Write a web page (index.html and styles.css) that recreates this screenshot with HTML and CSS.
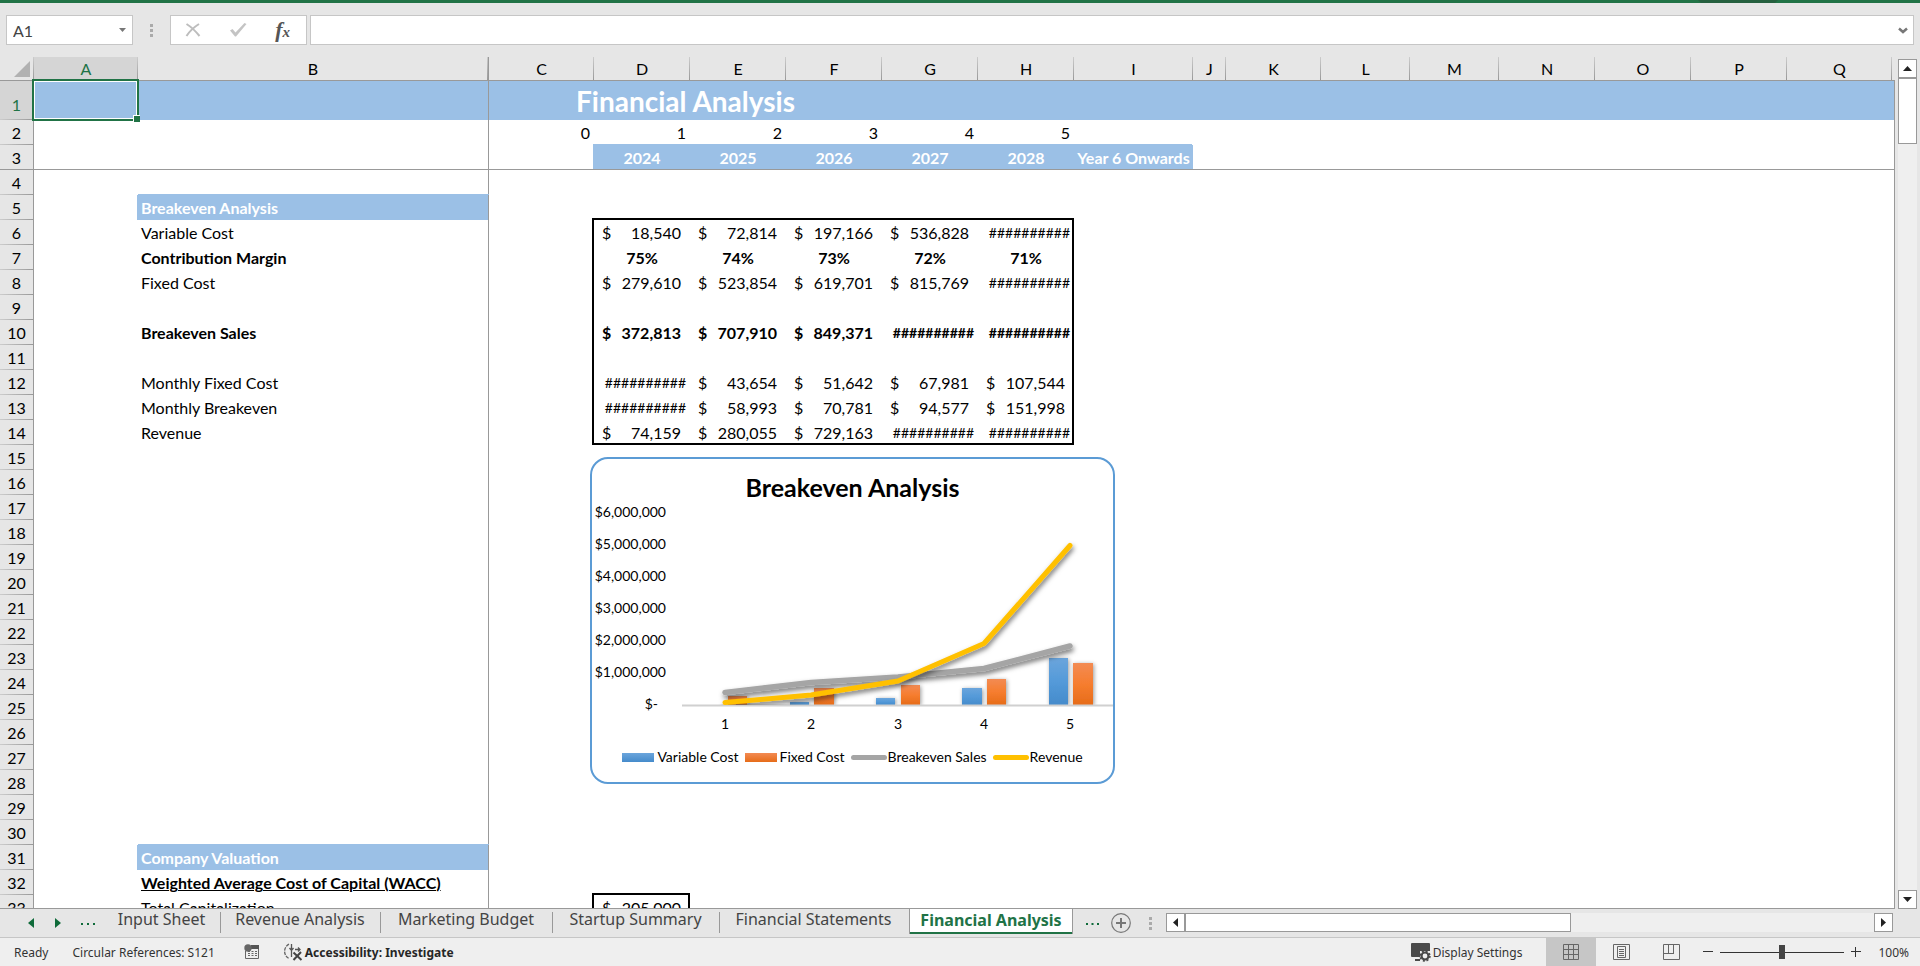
FILE: index.html
```html
<!DOCTYPE html>
<html lang="en">
<head>
<meta charset="utf-8">
<title>Financial Analysis</title>
<link rel="stylesheet" href="styles.css">
</head>
<body>
<div class="ribbon-edge"><svg class="ribbon-shade" width="80" height="3" viewBox="0 0 80 3"><path d="M0 0H80L77 3H3Z" fill="#25603f"/></svg></div>

<div class="formula-bar">
  <div class="name-box">
    <input class="name-input" type="text" value="A1" aria-label="Name box">
    <button class="plain name-drop" aria-label="Show names"><svg width="7" height="4" viewBox="0 0 7 4"><path d="M0 0H7L3.5 4Z" fill="#777"/></svg></button>
  </div>
  <svg class="grip" width="3" height="13" viewBox="0 0 3 13"><path d="M0 0h3v3H0zM0 5h3v3H0zM0 10h3v3H0z" fill="#aaa"/></svg>
  <div class="edit-tools">
    <button class="plain" aria-label="Cancel"><svg width="16" height="14" viewBox="0 0 16 14"><path d="M1.500 1 Q8 5 14.500 13M14 1 Q6 6 1.500 13" fill="none" stroke="#bdbdbd" stroke-width="2"/></svg></button>
    <button class="plain" aria-label="Enter"><svg width="18" height="15" viewBox="0 0 18 15"><path d="M1 8.500L3.500 7L6.500 10.500L15.500 1L17.500 2L7 14.500H6Z" fill="#c4c4c4"/></svg></button>
    <button class="plain fx" aria-label="Insert function"><i>f</i><i class="fx-x">x</i></button>
  </div>
  <div class="formula-box">
    <input class="formula-input" type="text" aria-label="Formula bar">
    <button class="plain expand" aria-label="Expand formula bar"><svg width="10" height="7" viewBox="0 0 10 7"><path d="M1 1.500L5 5L9 1.500" fill="none" stroke="#777" stroke-width="2.500"/></svg></button>
  </div>
</div>

<main class="workarea">
<div class="sheet">
<table class="grid">
<colgroup><col class="c-head"><col class="c-a"><col class="c-b"><col class="c-c"><col class="c-d"><col class="c-d"><col class="c-d"><col class="c-d"><col class="c-d"><col class="c-i"><col class="c-j"><col class="c-k"><col class="c-l"><col class="c-l"><col class="c-d"><col class="c-d"><col class="c-d"><col class="c-c"><col></colgroup>
<thead><tr><th class="corner"><svg width="16" height="16" viewBox="0 0 16 16"><path d="M16 0V16H0Z" fill="#b1b1b1"/></svg></th><th class="on">A</th><th class="b">B</th><th>C</th><th>D</th><th>E</th><th>F</th><th>G</th><th>H</th><th>I</th><th>J</th><th>K</th><th>L</th><th>M</th><th>N</th><th>O</th><th>P</th><th>Q</th><th class="rest"></th></tr></thead>
<tbody>
<tr class="banner"><th class="on">1</th><td class="active-cell"><div class="selection"></div></td><td class="b"></td><td class="title" colspan="4">Financial Analysis</td><td colspan="12"></td></tr>
<tr><th>2</th><td></td><td class="b"></td><td class="num">0</td><td class="num">1</td><td class="num">2</td><td class="num">3</td><td class="num">4</td><td class="num">5</td><td colspan="10"></td></tr>
<tr class="freeze"><th>3</th><td></td><td class="b"></td><td></td><td class="year">2024</td><td class="year">2025</td><td class="year">2026</td><td class="year">2027</td><td class="year">2028</td><td class="year">Year 6 Onwards</td><td colspan="9"></td></tr>
<tr><th>4</th><td></td><td class="b"></td><td colspan="16"></td></tr>
<tr><th>5</th><td></td><td class="b section">Breakeven Analysis</td><td colspan="16"></td></tr>
<tr><th>6</th><td></td><td class="b">Variable Cost</td><td></td>
<td class="box-tl"><div class="acct"><span>$</span><span>18,540</span></div></td><td class="box-t"><div class="acct"><span>$</span><span>72,814</span></div></td><td class="box-t"><div class="acct"><span>$</span><span>197,166</span></div></td><td class="box-t"><div class="acct"><span>$</span><span>536,828</span></div></td><td class="hash box-tr">##########</td><td colspan="10"></td></tr>
<tr class="strong"><th>7</th><td></td><td class="b">Contribution Margin</td><td></td><td class="pct box-l">75%</td><td class="pct">74%</td><td class="pct">73%</td><td class="pct">72%</td><td class="pct box-r">71%</td><td colspan="10"></td></tr>
<tr><th>8</th><td></td><td class="b">Fixed Cost</td><td></td>
<td class="box-l"><div class="acct"><span>$</span><span>279,610</span></div></td><td><div class="acct"><span>$</span><span>523,854</span></div></td><td><div class="acct"><span>$</span><span>619,701</span></div></td><td><div class="acct"><span>$</span><span>815,769</span></div></td><td class="hash box-r">##########</td><td colspan="10"></td></tr>
<tr><th>9</th><td></td><td class="b"></td><td></td><td class="box-l"></td><td colspan="3"></td><td class="box-r"></td><td colspan="10"></td></tr>
<tr class="strong"><th>10</th><td></td><td class="b">Breakeven Sales</td><td></td>
<td class="box-l"><div class="acct"><span>$</span><span>372,813</span></div></td><td><div class="acct"><span>$</span><span>707,910</span></div></td><td><div class="acct"><span>$</span><span>849,371</span></div></td><td class="hash">##########</td><td class="hash box-r">##########</td><td colspan="10"></td></tr>
<tr><th>11</th><td></td><td class="b"></td><td></td><td class="box-l"></td><td colspan="3"></td><td class="box-r"></td><td colspan="10"></td></tr>
<tr><th>12</th><td></td><td class="b">Monthly Fixed Cost</td><td></td>
<td class="hash box-l">##########</td><td><div class="acct"><span>$</span><span>43,654</span></div></td><td><div class="acct"><span>$</span><span>51,642</span></div></td><td><div class="acct"><span>$</span><span>67,981</span></div></td><td class="box-r"><div class="acct"><span>$</span><span>107,544</span></div></td><td colspan="10"></td></tr>
<tr><th>13</th><td></td><td class="b">Monthly Breakeven</td><td></td>
<td class="hash box-l">##########</td><td><div class="acct"><span>$</span><span>58,993</span></div></td><td><div class="acct"><span>$</span><span>70,781</span></div></td><td><div class="acct"><span>$</span><span>94,577</span></div></td><td class="box-r"><div class="acct"><span>$</span><span>151,998</span></div></td><td colspan="10"></td></tr>
<tr><th>14</th><td></td><td class="b">Revenue</td><td></td>
<td class="box-bl"><div class="acct"><span>$</span><span>74,159</span></div></td><td class="box-b"><div class="acct"><span>$</span><span>280,055</span></div></td><td class="box-b"><div class="acct"><span>$</span><span>729,163</span></div></td><td class="hash box-b">##########</td><td class="hash box-br">##########</td><td colspan="10"></td></tr>
<tr><th>15</th><td></td><td class="b"></td><td colspan="16"></td></tr>
<tr><th>16</th><td></td><td class="b"></td><td colspan="16"></td></tr>
<tr><th>17</th><td></td><td class="b"></td><td colspan="16"></td></tr>
<tr><th>18</th><td></td><td class="b"></td><td colspan="16"></td></tr>
<tr><th>19</th><td></td><td class="b"></td><td colspan="16"></td></tr>
<tr><th>20</th><td></td><td class="b"></td><td colspan="16"></td></tr>
<tr><th>21</th><td></td><td class="b"></td><td colspan="16"></td></tr>
<tr><th>22</th><td></td><td class="b"></td><td colspan="16"></td></tr>
<tr><th>23</th><td></td><td class="b"></td><td colspan="16"></td></tr>
<tr><th>24</th><td></td><td class="b"></td><td colspan="16"></td></tr>
<tr><th>25</th><td></td><td class="b"></td><td colspan="16"></td></tr>
<tr><th>26</th><td></td><td class="b"></td><td colspan="16"></td></tr>
<tr><th>27</th><td></td><td class="b"></td><td colspan="16"></td></tr>
<tr><th>28</th><td></td><td class="b"></td><td colspan="16"></td></tr>
<tr><th>29</th><td></td><td class="b"></td><td colspan="16"></td></tr>
<tr><th>30</th><td></td><td class="b"></td><td colspan="16"></td></tr>
<tr><th>31</th><td></td><td class="b section">Company Valuation</td><td colspan="16"></td></tr>
<tr class="strong"><th>32</th><td></td><td class="b under">Weighted Average Cost of Capital (WACC)</td><td colspan="16"></td></tr>
<tr><th>33</th><td></td><td class="b">Total Capitalization</td><td></td><td class="box-tlr"><div class="acct"><span>$</span><span>205,000</span></div></td><td colspan="14"></td></tr>
</tbody>
</table>

<figure class="chart">
  <figcaption class="chart-title">Breakeven Analysis</figcaption>
  <svg class="plot" width="521" height="236" viewBox="592 500 521 236">
    <defs>
      <linearGradient id="blue" x1="0" y1="0" x2="0" y2="1"><stop offset="0" stop-color="#6ba5dc"/><stop offset=".5" stop-color="#549ad9"/><stop offset="1" stop-color="#458bcb"/></linearGradient>
      <linearGradient id="orange" x1="0" y1="0" x2="0" y2="1"><stop offset="0" stop-color="#f38b53"/><stop offset=".5" stop-color="#f67d2f"/><stop offset="1" stop-color="#e66c19"/></linearGradient>
      <filter id="shadow" x="-10%" y="-30%" width="125%" height="170%"><feDropShadow dx="1" dy="3" stdDeviation="2.500" flood-color="#000" flood-opacity=".55"/></filter>
      <filter id="bar-shadow" x="-10%" y="-10%" width="120%" height="120%"><feDropShadow dx="1" dy="1" stdDeviation="2" flood-color="#000" flood-opacity=".4"/></filter>
      <clipPath id="above"><path d="M592 500H1113V705H592Z"/></clipPath>
    </defs>
    <g class="axis-money">
      <text x="666" y="517">$6,000,000</text><text x="666" y="549">$5,000,000</text><text x="666" y="581">$4,000,000</text><text x="666" y="613">$3,000,000</text><text x="666" y="645">$2,000,000</text><text x="666" y="677">$1,000,000</text><text x="658" y="709">$-</text>
    </g>
    <g clip-path="url(#above)">
      <g filter="url(#bar-shadow)" fill="url(#blue)"><path d="M790 702h19v3h-19z"/><path d="M876 698h19v7h-19z"/><path d="M962 688h20v17h-20z"/><path d="M1049 658h19v47h-19z"/></g>
      <g filter="url(#bar-shadow)" fill="url(#orange)"><path d="M728 696h19v9h-19z"/><path d="M814 688h20v17h-20z"/><path d="M901 685h19v20h-19z"/><path d="M987 679h19v26h-19z"/><path d="M1073 663h20v42h-20z"/></g>
    </g>
    <path d="M682 705.500H1113" stroke="#d0d0d0" stroke-width="2"/>
    <g clip-path="url(#above)" fill="none" stroke-linecap="round" stroke-linejoin="round">
      <path filter="url(#shadow)" d="M725 692.500L811 682.500L898 677L984 668.500L1070 646" stroke="#a5a5a5" stroke-width="5.500"/>
      <path filter="url(#shadow)" d="M725 702.500L811 695L898 681L984 643.500L1070 545.500" stroke="#ffc000" stroke-width="5"/>
    </g>
    <g class="axis-cat"><text x="725" y="729">1</text><text x="811" y="729">2</text><text x="898" y="729">3</text><text x="984" y="729">4</text><text x="1070" y="729">5</text></g>
  </svg>
  <div class="legend">
    <span class="key"><i class="swatch swatch-blue"></i>Variable Cost</span>
    <span class="key"><i class="swatch swatch-orange"></i>Fixed Cost</span>
    <span class="key key-line"><i class="line line-gray"></i>Breakeven Sales</span>
    <span class="key key-line"><i class="line line-gold"></i>Revenue</span>
  </div>
</figure>
</div>

<div class="vscroll">
  <button class="scroll-btn" aria-label="Scroll up"><svg width="9" height="5" viewBox="0 0 9 5"><path d="M0 5H9L4.500 0Z" fill="#222"/></svg></button>
  <div class="vthumb"></div>
  <button class="scroll-btn vdown" aria-label="Scroll down"><svg width="9" height="5" viewBox="0 0 9 5"><path d="M0 0H9L4.500 5Z" fill="#222"/></svg></button>
</div>
</main>

<nav class="tabbar">
  <div class="tab-nav">
    <button class="plain" aria-label="Previous sheet"><svg width="6" height="10" viewBox="0 0 6 10"><path d="M6 0V10L0 5Z" fill="#0f6b3a"/></svg></button>
    <button class="plain" aria-label="Next sheet"><svg width="6" height="10" viewBox="0 0 6 10"><path d="M0 0V10L6 5Z" fill="#0f6b3a"/></svg></button>
    <button class="plain" aria-label="More sheets"><svg width="14" height="3" viewBox="0 0 14 3"><path d="M0 1h2v2H0zM6 1h2v2h-2zM12 1h2v2h-2z" fill="#0f6b3a"/></svg></button>
  </div>
  <button class="tab w1">Input Sheet</button>
  <button class="tab w2">Revenue Analysis</button>
  <button class="tab w3">Marketing Budget</button>
  <button class="tab w4">Startup Summary</button>
  <button class="tab w5 last">Financial Statements</button>
  <button class="tab w6 current">Financial Analysis</button>
  <div class="tab-extra">
    <button class="plain" aria-label="More sheets"><svg width="13" height="3" viewBox="0 0 13 3"><path d="M0 1h2v2H0zM5.500 1h2v2h-2zM11 1h2v2h-2z" fill="#0f6b3a"/></svg></button>
    <button class="plain" aria-label="New sheet"><svg width="20" height="20" viewBox="0 0 20 20"><circle cx="10" cy="10" r="9.300" fill="none" stroke="#777" stroke-width="1.200"/><path d="M10 5V15M5 10H15" stroke="#777" stroke-width="2"/></svg></button>
    <svg class="tab-grip" width="3" height="13" viewBox="0 0 3 13"><path d="M0 0h3v3H0zM0 5h3v3H0zM0 10h3v3H0z" fill="#aaa"/></svg>
  </div>
  <div class="hscroll">
    <button class="scroll-btn" aria-label="Scroll left"><svg width="5" height="9" viewBox="0 0 5 9"><path d="M5 0V9L0 4.500Z" fill="#222"/></svg></button>
    <div class="htrack"><div class="hthumb"></div></div>
    <button class="scroll-btn" aria-label="Scroll right"><svg width="5" height="9" viewBox="0 0 5 9"><path d="M0 0V9L5 4.500Z" fill="#222"/></svg></button>
  </div>
</nav>

<footer class="status">
  <span>Ready</span>
  <span class="circular">Circular References: S121</span>
  <button class="plain macro" aria-label="Record macro"><svg width="16" height="16" viewBox="0 0 16 16"><path d="M1.500 7V14.500H14.500V2.500" fill="none" stroke="#666"/><path d="M7 1H15V5H7Z" fill="#555"/><circle cx="4" cy="4" r="3.700" fill="#666"/><path d="M4 7.500h9M4 9.500h9M4 11.500h9" stroke="#666" stroke-dasharray="2 1.500"/></svg></button>
  <button class="plain access"><svg width="20" height="18" viewBox="0 0 20 18"><path d="M6 1.200A8 8 0 0 0 6 15.500" fill="none" stroke="#666" stroke-width="1.300" stroke-dasharray="3.500 1"/><path d="M8.500 1V7M6.500 5L8.500 7.500L10.500 5M12 6.500H17M15 4.500L17 6.500L15 8.500M8.500 8V14" fill="none" stroke="#555" stroke-width="1.300"/><path d="M10.500 9.500L18.500 17M18 9L10.500 17" stroke="#444" stroke-width="2"/></svg>Accessibility: Investigate</button>
  <span class="spacer"></span>
  <button class="plain display"><svg width="20" height="19" viewBox="0 0 20 19"><path d="M1 0H18Q19 0 19 1V8H9V14H1Q0 14 0 13V1Q0 0 1 0ZM4 16H9V18H4Z" fill="#4a4a4a"/><circle cx="14" cy="13" r="3.500" fill="none" stroke="#4a4a4a" stroke-width="2.200"/><circle cx="14" cy="13" r="4.900" fill="none" stroke="#4a4a4a" stroke-width="1.600" stroke-dasharray="2 1.850"/></svg>Display Settings</button>
  <button class="plain view view-on" aria-label="Normal"><svg width="16" height="16" viewBox="0 0 16 16"><path d="M.5.500h15v15H.500zM5.500 0v16M10.500 0v16M0 5.500h16M0 10.500h16" fill="none" stroke="#666"/></svg></button>
  <button class="plain view" aria-label="Page layout"><svg width="17" height="16" viewBox="0 0 17 16"><path d="M.5.500h16v15H.500zM4.500 2.500h8v11h-8zM6 5.500h5M6 7.500h5M6 9.500h5M6 11.500h5" fill="none" stroke="#666"/></svg></button>
  <button class="plain view" aria-label="Page break preview"><svg width="17" height="16" viewBox="0 0 17 16"><path d="M.5.500h16v15H.500zM5.500 1v9M10.500 1v9M1 9.500h10" fill="none" stroke="#666"/></svg></button>
  <button class="plain zoom-out" aria-label="Zoom out"><svg width="10" height="10" viewBox="0 0 10 10"><path d="M0 4.500H10" stroke="#333"/></svg></button>
  <input class="zoom" type="range" min="0" max="200" value="100" aria-label="Zoom">
  <button class="plain zoom-in" aria-label="Zoom in"><svg width="10" height="10" viewBox="0 0 10 10"><path d="M0 4.500H10M4.500 0V10" stroke="#333"/></svg></button>
  <span class="percent">100%</span>
</footer>
</body>
</html>
```
FILE: styles.css
```css
* { box-sizing: border-box; }

body {
  margin: 0;
  height: 100vh;
  display: flex;
  flex-direction: column;
  overflow: hidden;
  background: #e6e6e6;
  color: #000;
  font-family: Lato, "Liberation Sans", sans-serif;
  font-size: 16px;
}

svg { display: block; flex: none; }

.plain {
  border: 0;
  padding: 0;
  background: none;
  color: inherit;
  font: inherit;
  display: flex;
  align-items: center;
  justify-content: center;
}

.ribbon-edge { height: 3px; flex: none; background: #217346; display: flex; justify-content: flex-end; padding-right: 142px; }

/* Formula bar */
.formula-bar { flex: none; height: 54px; padding: 12px 6px; display: flex; align-items: center; }
.name-box, .edit-tools, .formula-box { height: 30px; background: #fff; border: 1px solid #c6c6c6; display: flex; align-items: center; }
.name-box { width: 127px; padding: 0 6px; }
.name-input, .formula-input { flex: 1; min-width: 0; border: 0; padding: 0; outline: 0; background: none; font: inherit; color: #444; }
.grip { margin: 0 17px; }
.edit-tools { width: 137px; justify-content: space-between; padding: 0 16px 1px 14px; margin-right: 3px; }
.fx { color: #555; font-family: "Liberation Serif", serif; font-size: 22px; font-weight: 700; line-height: 20px; }
.fx-x { font-size: 15px; padding-top: 4px; }
.formula-box { flex: 1; padding: 0 5px; }

/* Worksheet */
.workarea { flex: 1; min-height: 0; display: flex; }
.sheet { position: relative; flex: 1; min-width: 0; overflow: hidden; border-bottom: 1px solid #999; }
.grid { width: 100%; table-layout: fixed; border-collapse: separate; border-spacing: 0; line-height: 22px; }
.c-head { width: 34px; }
.c-a { width: 104px; }
.c-b { width: 351px; }
.c-c { width: 105px; }
.c-d { width: 96px; }
.c-i { width: 119px; }
.c-j { width: 33px; }
.c-k { width: 95px; }
.c-l { width: 89px; }

.grid th, .grid td { padding: 0 0 1px; height: 25px; vertical-align: bottom; white-space: nowrap; }
.grid th { font-weight: 400; text-align: center; background: #e6e6e6; }
.grid thead th {
  height: 24px;
  padding: 0;
  border-bottom: 1px solid #999;
  background: linear-gradient(#ccc, #999) right / 1px 100% no-repeat #e6e6e6;
}
.grid thead .on { background-color: #d5d5d5; color: #217346; }
.grid thead .rest { background: #e6e6e6; }
.grid thead .corner { padding: 0 4px 3px 14px; }
.grid tbody th {
  border-right: 1px solid #999;
  background: linear-gradient(90deg, #ccc, #999) bottom / 100% 1px no-repeat #e6e6e6;
}
.grid tbody .on { background-color: #d5d5d5; color: #217346; }
.grid td { position: relative; background-color: #fff; }
.grid td:last-child { border-right: 1px solid #999; }
.grid td.b { border-right: 1px solid #999; padding-left: 3px; }
.grid thead th.b { border-right: 1px solid #999; }

.grid .banner th { height: 39px; padding-bottom: 4px; }
.grid .banner td { height: 39px; background: #9bc0e6; }
.grid .title { color: #fff; font-size: 28px; font-weight: 700; line-height: 36px; text-align: center; }
.grid .freeze td { border-bottom: 1px solid #999; padding-bottom: 0; }
.grid .freeze th { background: linear-gradient(#999, #999) bottom / 100% 1px no-repeat #e6e6e6; }
.num { text-align: right; }
.grid td.num { padding-right: 4px; }
.grid .year { background: #9bc0e6; color: #fff; font-weight: 700; text-align: center; box-shadow: -1px -1px #9bc0e6; }
.grid .section { background: #9bc0e6; color: #fff; font-weight: 700; box-shadow: -1px 0 #9bc0e6, 0 -1px #9bc0e6; }
.strong td { font-weight: 700; }
.under { text-decoration: underline; text-decoration-thickness: 1px; }
.pct { text-align: center; }
.grid .hash { text-align: right; padding-right: 4px; font-size: 14px; }
.acct { display: flex; justify-content: space-between; padding: 0 9px 0 8px; }

/* Thick outline round a block of cells */
.box-t { box-shadow: 0 -2px #000; }
.box-l { box-shadow: -2px 0 #000; }
.box-r { box-shadow: inset -2px 0 #000; }
.box-b { box-shadow: inset 0 -2px #000; }
.box-tl { box-shadow: 0 -2px #000, -2px 0 #000, -2px -2px #000; }
.box-tr { box-shadow: 0 -2px #000, inset -2px 0 #000; }
.box-bl { box-shadow: -2px 0 #000, inset 0 -2px #000; }
.box-br { box-shadow: inset -2px -2px #000; }
.box-tlr { box-shadow: 0 -2px #000, -2px 0 #000, -2px -2px #000, inset -2px 0 #000; }

.grid .active-cell { z-index: 1; }
.selection { position: absolute; inset: -2px -1px -1px -2px; border: 2px solid #217346; box-shadow: inset 0 0 0 1px #fff; }
.selection::after { content: ""; position: absolute; right: -3px; bottom: -3px; width: 6px; height: 6px; background: #217346; border: 1px solid #fff; border-width: 1px 0 0 1px; }

/* Chart floating over the cells */
.chart {
  position: absolute;
  left: 590px;
  top: 400px;
  z-index: 2;
  width: 525px;
  height: 327px;
  margin: 0;
  border: 2px solid #5b9bd5;
  border-radius: 18px;
  background: #fff;
  overflow: hidden;
  display: flex;
  flex-direction: column;
}
.chart-title { height: 41px; padding-top: 12px; text-align: center; font-size: 25px; line-height: 32px; font-weight: 700; }
.plot { overflow: visible; }
.axis-money { font-size: 14px; text-anchor: end; }
.axis-cat { font-size: 14px; text-anchor: middle; }
.legend { display: flex; justify-content: center; gap: 6px; padding-top: 11px; font-size: 14px; line-height: 20px; }
.key { display: flex; align-items: center; gap: 3px; }
.key-line { gap: 1px; }
.swatch { width: 32px; height: 9px; }
.swatch-blue { background: linear-gradient(#6ba5dc, #458bcb); }
.swatch-orange { background: linear-gradient(#f38b53, #e66c19); }
.line { width: 36px; height: 5px; border-radius: 3px; }
.line-gray { background: #a5a5a5; }
.line-gold { background: #ffc000; }

/* Scroll bars */
.scroll-btn { width: 19px; height: 19px; flex: none; padding: 0; border: 1px solid #999; background: #fff; display: flex; align-items: center; justify-content: center; }
.vscroll { flex: none; width: 19px; margin: 2px 3px 0 3px; background: #efefef; display: flex; flex-direction: column; }
.vthumb { height: 66px; border: 1px solid #999; background: #fff; }
.vdown { margin-top: auto; }
.hscroll { flex: 1; display: flex; height: 19px; margin: 4px 27px 0 14px; }
.htrack { flex: 1; background: #efefef; }
.hthumb { width: 56%; height: 19px; border: 1px solid #999; background: #fff; }

/* Sheet tabs */
.tabbar { flex: none; height: 28px; display: flex; align-items: flex-start; font-family: "Noto Sans", sans-serif; font-size: 16px; }
.tab-nav { width: 104px; padding: 9px 9px 0 28px; display: flex; align-items: center; justify-content: space-between; }
.tab { height: 24px; border: 0; padding: 0 2px 4px 0; background: linear-gradient(#999, #999) right bottom / 1px 21px no-repeat; color: #444; font: inherit; line-height: 20px; white-space: nowrap; }
.w1 { width: 117px; }
.w2 { width: 160px; }
.w3 { width: 172px; }
.w4 { width: 167px; }
.w5 { width: 189px; }
.w6 { width: 164px; }
.tab.last { background: none; }
.tab.current { height: 25px; padding-right: 0; background: #fff; color: #217346; font-weight: 700; border: 1px solid #999; border-width: 0 1px 0; box-shadow: inset 0 -2px #217346, 0 -1px #fff; }
.tab-extra { width: 79px; padding: 4px 0 0 13px; display: flex; align-items: center; gap: 12px; }
.tab-grip { margin-left: 6px; }

/* Status bar */
.status { flex: none; height: 29px; border-top: 1px solid #c6c6c6; background: #efefef; color: #333; display: flex; align-items: center; padding: 0 11px 0 14px; font-family: "Noto Sans", sans-serif; font-size: 12px; }
.circular { margin-left: 24px; }
.macro { margin-left: 29px; }
.access { margin-left: 23px; gap: 2px; color: #262626; font-weight: 700; }
.spacer { flex: 1; }
.display { gap: 2px; margin-right: 24px; }
.view { width: 50px; height: 28px; }
.view-on { background: #c6c6c6; }
.zoom-out { margin-left: 7px; }
.zoom { appearance: none; width: 124px; height: 14px; margin: 0 7px; background: linear-gradient(#333, #333) center / 100% 1px no-repeat; }
.zoom::-webkit-slider-thumb { appearance: none; width: 6px; height: 14px; background: #444; border: 0; }
.percent { margin-left: 17px; }
```
